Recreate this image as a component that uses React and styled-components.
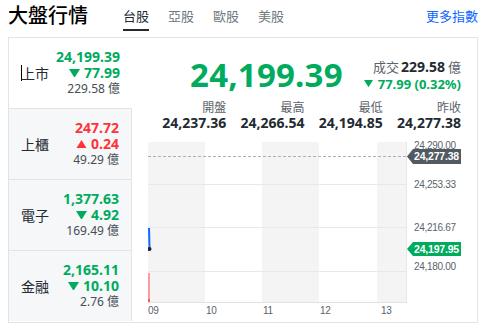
import React from 'react'
import styled, { createGlobalStyle } from 'styled-components'

const GREEN = '#00ab5e'
const RED = '#ff333a'
const DARK = '#232a31'
const GRAY = '#5b636a'

const GlobalStyle = createGlobalStyle`
  html, body {
    margin: 0;
    padding: 0;
    background: #fff;
  }
  body {
    font-family: "Noto Sans", "Noto Sans CJK TC", sans-serif;
    color: ${DARK};
  }
`

const Page = styled.div`
  width: 486px;
  padding: 0 8px;
  box-sizing: border-box;
`

const Header = styled.div`
  display: flex;
  align-items: center;
  height: 31px;
  margin-bottom: 6px;
`

const Title = styled.h1`
  margin: 0;
  width: 115px;
  font-size: 20px;
  font-weight: 500;
  line-height: 31px;
  color: #000;
`

const Tabs = styled.div`
  display: flex;
  gap: 19px;
  height: 100%;
`

const Tab = styled.div`
  display: flex;
  align-items: center;
  height: 100%;
  font-size: 13px;
  color: ${p => (p.$active ? DARK : '#6e7780')};
  box-shadow: ${p => (p.$active ? `inset 0 -2px 0 ${DARK}` : 'none')};
`

const MoreLink = styled.a`
  margin-left: auto;
  font-size: 13px;
  color: #0f69ff;
  text-decoration: none;
`

const Panel = styled.div`
  display: flex;
  height: 286px;
  border: 1px solid #e0e4e9;
  box-sizing: border-box;
`

const Sidebar = styled.div`
  display: flex;
  flex-direction: column;
  width: 123px;
  flex-shrink: 0;
`

const Item = styled.div`
  display: flex;
  align-items: center;
  justify-content: space-between;
  height: ${p => (p.$first ? '70px' : '71px')};
  box-sizing: border-box;
  padding: 0 12px 0 12px;
  background: ${p => (p.$active ? '#fff' : '#f5f7f9')};
  border-top: ${p => (p.$first ? 'none' : '1px solid #e0e4e9')};
  border-right: ${p => (p.$active ? 'none' : '1px solid #e0e4e9')};
`

const ItemLabel = styled.div`
  display: flex;
  align-items: center;
  font-size: 14px;
  color: ${DARK};
`

const Caret = styled.span`
  display: inline-block;
  width: 1px;
  height: 16px;
  margin-right: -1px;
  background: #000;
`

const Values = styled.div`
  display: flex;
  flex-direction: column;
  align-items: flex-end;
`

const Price = styled.div`
  font-size: 14px;
  font-weight: 700;
  line-height: 16px;
  color: ${p => p.$color};
`

const Change = styled.div`
  display: flex;
  align-items: center;
  gap: 4px;
  height: 16px;
  font-size: 14px;
  font-weight: 700;
  line-height: 16px;
  color: ${p => p.$color};
`

const Volume = styled.div`
  font-size: 12px;
  line-height: 16px;
  color: #464e56;
`

const Main = styled.div`
  flex: 1;
  display: flex;
  flex-direction: column;
  padding: 0 16px;
  min-width: 0;
`

const QuoteRow = styled.div`
  display: flex;
  justify-content: flex-end;
  align-items: center;
  gap: 21px;
  margin-top: 16px;
  height: 42px;
`

const BigPrice = styled.div`
  font-size: 33px;
  font-weight: 700;
  line-height: 42px;
  color: ${GREEN};
  letter-spacing: 0.2px;
`

const QuoteSide = styled.div`
  display: flex;
  flex-direction: column;
  align-items: flex-end;
`

const Turnover = styled.div`
  font-size: 13px;
  line-height: 17px;
  color: ${GRAY};

  b {
    font-size: 14px;
    font-weight: 700;
    color: ${DARK};
    margin: 0 3px 0 2px;
  }
`

const SideChange = styled.div`
  display: flex;
  align-items: center;
  gap: 5px;
  height: 17px;
  font-size: 13px;
  font-weight: 700;
  line-height: 17px;
  color: ${GREEN};
`

const Stats = styled.div`
  display: grid;
  grid-template-columns: repeat(4, 1fr);
  margin-top: 4px;
`

const Stat = styled.div`
  display: flex;
  flex-direction: column;
  align-items: flex-end;
`

const StatLabel = styled.div`
  font-size: 12px;
  line-height: 15px;
  color: ${GRAY};
`

const StatValue = styled.div`
  font-size: 14px;
  font-weight: 700;
  line-height: 16px;
  color: ${DARK};
`

const Chart = styled.svg`
  display: block;
  margin-top: 7px;
  font-family: "Liberation Sans", Arial, sans-serif;
`

const Triangle = ({ up, color, size = 9 }) => (
  <svg width={size} height={size * 0.8} viewBox="0 0 10 8">
    {up ? (
      <polygon points="0,8 10,8 5,0" fill={color} />
    ) : (
      <polygon points="0,0 10,0 5,8" fill={color} />
    )}
  </svg>
)

const markets = [
  { name: '上市', price: '24,199.39', change: '77.99', vol: '229.58', up: false },
  { name: '上櫃', price: '247.72', change: '0.24', vol: '49.29', up: true },
  { name: '電子', price: '1,377.63', change: '4.92', vol: '169.49', up: false },
  { name: '金融', price: '2,165.11', change: '10.10', vol: '2.76', up: false },
]

const stats = [
  { label: '開盤', value: '24,237.36' },
  { label: '最高', value: '24,266.54' },
  { label: '最低', value: '24,194.85' },
  { label: '昨收', value: '24,277.38' },
]

const PriceTag = ({ y, h, color, text }) => (
  <g>
    <path
      d={`M259 ${y} L265 ${y - h / 2} L313 ${y - h / 2} L313 ${y + h / 2} L265 ${y + h / 2} Z`}
      fill={color}
    />
    <text x="266" y={y + 3.7} fontSize="10.5" fill="#fff" fontWeight="600" letterSpacing="-0.2">
      {text}
    </text>
  </g>
)

function IntradayChart() {
  const bands = [
    [0, 57, true],
    [57, 57, false],
    [114, 57, true],
    [171, 58, false],
    [229, 29, true],
  ]
  const yLabels = [
    ['24,290.00', 7],
    ['24,253.33', 46],
    ['24,216.67', 89],
    ['24,180.00', 128],
  ]
  const xLabels = [
    ['09', 0],
    ['10', 58],
    ['11', 115],
    ['12', 172],
    ['13', 233],
  ]
  return (
    <Chart width="313" height="180" viewBox="0 0 313 180">
      {bands.map(([x, w, gray]) => (
        <rect key={x} x={x} y="4" width={w} height="160" fill={gray ? '#f4f4f4' : '#fff'} />
      ))}
      {[46, 89, 133].map(y => (
        <line key={y} x1="0" x2="258" y1={y + 0.5} y2={y + 0.5} stroke="#e8e8e8" />
      ))}
      <line x1="258.5" x2="258.5" y1="4" y2="164" stroke="#e6e6e6" />
      <line x1="0" x2="259" y1="164.5" y2="164.5" stroke="#e2e2e2" />
      <line x1="0" x2="258" y1="18.5" y2="18.5" stroke="#b0b0b0" strokeDasharray="3 2" />

      <rect x="0" y="135" width="2" height="29" fill="#ff9aa0" />
      <rect x="0" y="161" width="2" height="3" fill="#ff5a62" />
      <line x1="1" x2="1.5" y1="90" y2="110" stroke="#0f69ff" strokeWidth="2" />
      <circle cx="1.5" cy="111" r="2" fill="#222" />

      <g fontSize="10" fill={GRAY} letterSpacing="-0.3">
        {yLabels.map(([t, y]) => (
          <text key={t} x="266" y={y + 3.5}>
            {t}
          </text>
        ))}
        {xLabels.map(([t, x]) => (
          <text key={t} x={x} y="175.5">
            {t}
          </text>
        ))}
      </g>

      <PriceTag y={18.5} h={15} color="#525a61" text="24,277.38" />
      <PriceTag y={111} h={14} color={GREEN} text="24,197.95" />
    </Chart>
  )
}

export default function App() {
  return (
    <Page>
      <GlobalStyle />
      <Header>
        <Title>大盤行情</Title>
        <Tabs>
          <Tab $active>台股</Tab>
          <Tab>亞股</Tab>
          <Tab>歐股</Tab>
          <Tab>美股</Tab>
        </Tabs>
        <MoreLink href="#">更多指數</MoreLink>
      </Header>
      <Panel>
        <Sidebar>
          {markets.map((m, i) => {
            const color = m.up ? RED : GREEN
            return (
              <Item key={m.name} $active={i === 0} $first={i === 0}>
                <ItemLabel>
                  {i === 0 && <Caret />}
                  {m.name}
                </ItemLabel>
                <Values>
                  <Price $color={color}>{m.price}</Price>
                  <Change $color={color}>
                    <Triangle up={m.up} color={color} size={11} />
                    {m.change}
                  </Change>
                  <Volume>{m.vol} 億</Volume>
                </Values>
              </Item>
            )
          })}
        </Sidebar>
        <Main>
          <QuoteRow>
            <BigPrice>24,199.39</BigPrice>
            <QuoteSide>
              <Turnover>
                成交<b>229.58</b>億
              </Turnover>
              <SideChange>
                <Triangle color={GREEN} size={9} />
                77.99 (0.32%)
              </SideChange>
            </QuoteSide>
          </QuoteRow>
          <Stats>
            {stats.map(s => (
              <Stat key={s.label}>
                <StatLabel>{s.label}</StatLabel>
                <StatValue>{s.value}</StatValue>
              </Stat>
            ))}
          </Stats>
          <IntradayChart />
        </Main>
      </Panel>
    </Page>
  )
}
